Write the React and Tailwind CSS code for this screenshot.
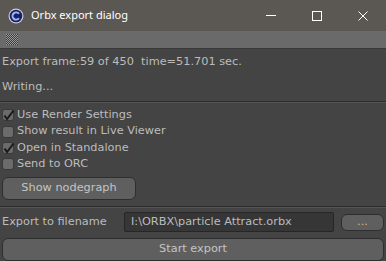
import React from "react";

const font = { fontFamily: '"DejaVu Sans", Verdana, sans-serif' };

function Check({ checked }) {
  return (
    <span className="relative inline-block w-[12px] h-[12px] rounded-[3px] bg-[#6b6b6b] border border-[#3a3a3a] shrink-0">
      {checked ? (
        <svg className="absolute left-[0px] top-[-1px]" width="12" height="12" viewBox="0 0 12 12">
          <path d="M1.5 6.5 L4 10 L10.5 1.5" stroke="#1a1a1a" strokeWidth="2" fill="none" />
        </svg>
      ) : null}
    </span>
  );
}

function Row({ checked, label }) {
  return (
    <div className="flex items-center gap-[3px] h-[16.4px] pl-[2px]">
      <Check checked={checked} />
      <span>{label}</span>
    </div>
  );
}

export default function App() {
  return (
    <div className="w-[386px] h-[261px] bg-[#444444] text-[#bcbcbc] text-[11.3px] flex flex-col overflow-hidden" style={font}>
      {/* title bar */}
      <div className="h-[31px] bg-[#5b5753] flex items-center shrink-0">
        <svg className="ml-[8px]" width="16" height="16" viewBox="0 0 16 16">
          <circle cx="8" cy="8" r="7.5" fill="#c8ccd8" />
          <circle cx="8" cy="8" r="6.3" fill="#16206a" />
          <path d="M11.8 5.2 A4.6 4.6 0 1 0 11.8 10.8 L10 9.8 A2.6 2.6 0 1 1 10 6.2 Z" fill="#a8b4e8" />
        </svg>
        <span className="ml-[7px] text-white text-[11px]" style={{ fontFamily: '"Noto Sans", "Open Sans", sans-serif' }}>
          Orbx export dialog
        </span>
        <div className="ml-auto flex items-center h-full">
          <div className="w-[46px] h-full flex items-center justify-center">
            <div className="w-[10px] h-[1px] bg-white" />
          </div>
          <div className="w-[46px] h-full flex items-center justify-center">
            <div className="w-[10px] h-[10px] border border-white" />
          </div>
          <div className="w-[46px] h-full flex items-center justify-center">
            <svg width="10" height="10" viewBox="0 0 10 10">
              <path d="M0.5 0.5 L9.5 9.5 M9.5 0.5 L0.5 9.5" stroke="white" strokeWidth="1" />
            </svg>
          </div>
        </div>
      </div>
      {/* toolbar strip */}
      <div className="h-[18px] bg-[#6a6a6a] border-b border-[#383838] flex items-center shrink-0">
        <div
          className="ml-[6px] w-[12px] h-[11px]"
          style={{
            backgroundImage:
              "repeating-conic-gradient(#3c3c3c 0% 25%, #9a9a9a 0% 50%)",
            backgroundSize: "2px 2px",
          }}
        />
      </div>
      {/* status */}
      <div className="pl-[2px] pt-[1px] leading-[24px]">
        <div>Export frame:59 of 450&nbsp; time=51.701 sec.</div>
        <div className="mt-[1px]">Writing...</div>
      </div>
      <div className="mt-[2px] h-[2px] border-t border-[#2c2c2c] border-b border-b-[#555555]" />
      {/* options */}
      <div className="pt-[4px] flex flex-col">
        <Row checked label="Use Render Settings" />
        <Row label="Show result in Live Viewer" />
        <Row checked label="Open in Standalone" />
        <Row label="Send to ORC" />
      </div>
      <div className="pl-[2px] pt-[4px]">
        <button className="w-[134px] h-[23px] rounded-[6px] bg-[#5f5f5f] border border-[#2e2e2e] text-[#c4c4c4]" style={font}>
          Show nodegraph
        </button>
      </div>
      <div className="mt-[6px] h-[2px] border-t border-[#2c2c2c] border-b border-b-[#555555]" />
      {/* filename */}
      <div className="flex items-center pl-[2px] pt-[3px] h-[26px]">
        <span className="w-[122px]">Export to filename</span>
        <div className="w-[210px] h-[20px] bg-[#363636] border border-[#262626] rounded-[2px] flex items-center pl-[6px]">
          I:\ORBX\particle Attract.orbx
        </div>
        <button className="ml-[7px] w-[43px] h-[17px] rounded-[6px] bg-[#5f5f5f] border border-[#2e2e2e] text-[#d8b890] leading-[10px]" style={font}>
          ...
        </button>
      </div>
      <div className="pl-[2px] pr-[2px] pt-[4px]">
        <button className="w-full h-[23px] rounded-[6px] bg-[#5f5f5f] border border-[#2e2e2e] text-[#c4c4c4]" style={font}>
          Start export
        </button>
      </div>
    </div>
  );
}
